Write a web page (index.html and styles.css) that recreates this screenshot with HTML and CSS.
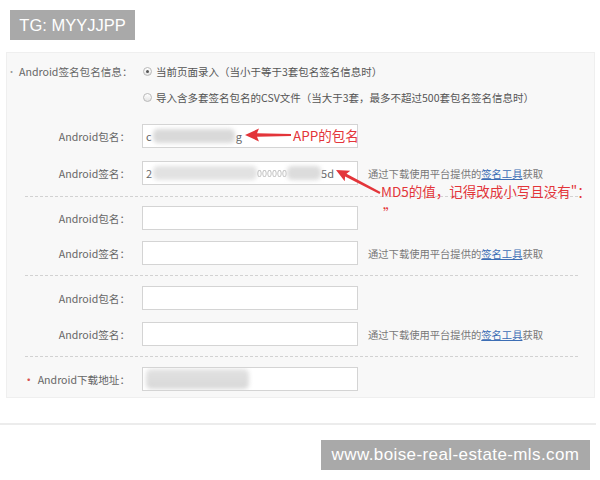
FILE: index.html
```html
<!DOCTYPE html>
<html lang="zh-CN">
<head>
<meta charset="utf-8">
<title>Android签名包名信息</title>
<link rel="stylesheet" href="styles.css">
</head>
<body>
<div class="tag tag-top">TG: MYYJJPP</div>

<div class="panel">
  <div class="row radio-row">
    <div class="label"><span class="dot">•</span>Android签名包名信息：</div>
    <div class="radio-line"><span class="radio checked"></span>当前页面录入（当小于等于3套包名签名信息时）</div>
  </div>
  <div class="row radio-row second">
    <div class="label"></div>
    <div class="radio-line"><span class="radio"></span>导入含多套签名包名的CSV文件（当大于3套，最多不超过500套包名签名信息时）</div>
  </div>

  <div class="group g1">
    <div class="row field">
      <div class="label">Android包名：</div>
      <div class="input"><span>c</span><span class="blob b1"></span><span>g</span></div>
    </div>
    <div class="row field">
      <div class="label">Android签名：</div>
      <div class="input"><span>2</span><span class="blob b2"></span><span class="faint">000000</span><span class="blob b3"></span><span>5d</span></div>
      <div class="hint">通过下载使用平台提供的<span class="link">签名工具</span>获取</div>
    </div>
  </div>
  <div class="sep s1"></div>

  <div class="group g2">
    <div class="row field">
      <div class="label">Android包名：</div>
      <div class="input"></div>
    </div>
    <div class="row field">
      <div class="label">Android签名：</div>
      <div class="input"></div>
      <div class="hint">通过下载使用平台提供的<span class="link">签名工具</span>获取</div>
    </div>
  </div>
  <div class="sep s2"></div>

  <div class="group g3">
    <div class="row field">
      <div class="label">Android包名：</div>
      <div class="input"></div>
    </div>
    <div class="row field">
      <div class="label">Android签名：</div>
      <div class="input"></div>
      <div class="hint">通过下载使用平台提供的<span class="link">签名工具</span>获取</div>
    </div>
  </div>
  <div class="sep s3"></div>

  <div class="row field dl">
    <div class="label"><span class="dot red">•</span>Android下载地址：</div>
    <div class="input"><span class="blob b4"></span></div>
  </div>
</div>

<div class="rule"></div>
<div class="tag tag-bottom">www.boise-real-estate-mls.com</div>

<svg class="arrows" width="600" height="480" viewBox="0 0 600 480" aria-hidden="true">
  <polygon points="245,135 259,128.5 257,133.2 291,133.9 291,136.1 257,136.8 259,141.5" fill="#e3353a"/>
  <polygon points="336,170 350.3,170.7 346.5,173.8 380.5,192.1 379.5,193.9 345.1,176.4 344.7,181.3" fill="#e3353a"/>
</svg>
<div class="note note1">APP的包名</div>
<div class="note note2">MD5的值，记得改成小写且没有"：</div>
<div class="note note3">”</div>
</body>
</html>
```

FILE: styles.css
```css
html, body {
  margin: 0;
  padding: 0;
}
body {
  position: relative;
  width: 600px;
  height: 480px;
  overflow: hidden;
  background: #ffffff;
  padding-top: 10px;
  box-sizing: border-box;
  font-family: "Noto Sans CJK SC", "Noto Sans", sans-serif;
  font-size: 10.6px;
  color: #666;
}

.tag {
  background: #a9a9a9;
  color: #ffffff;
  height: 30px;
  line-height: 30px;
  text-align: center;
  font-family: "Liberation Sans", Arial, sans-serif;
}
.tag-top {
  margin-left: 10px;
  width: 125px;
  font-size: 16.5px;
}
.tag-bottom {
  margin: 15px 0 0 321px;
  width: 269px;
  font-size: 17px;
  letter-spacing: 0.4px;
}

.panel {
  margin: 12px 0 0 6px;
  width: 589px;
  box-sizing: border-box;
  background: #f8f8f8;
  border: 1px solid #efefef;
  padding: 8px 0 6px;
}

.row {
  display: flex;
  align-items: center;
}
.label {
  width: 123px;
  flex: none;
  text-align: right;
  margin-right: 12px;
  color: #666;
  white-space: nowrap;
}
.dot {
  font-size: 9px;
  color: #999;
  margin-right: 3px;
  vertical-align: 1px;
}
.dot.red {
  font-size: 12px;
  color: #d9534f;
  margin-right: 3px;
  vertical-align: -1px;
}

.radio-row {
  height: 20px;
}
.radio-row.second {
  margin-top: 6px;
}
.radio-line {
  display: flex;
  align-items: center;
  color: #555;
  font-size: 10.5px;
  white-space: nowrap;
}
.radio {
  width: 9px;
  height: 9px;
  box-sizing: border-box;
  border: 1px solid #b9b9b9;
  border-radius: 50%;
  background: linear-gradient(#ffffff, #e4e4e4);
  margin: 0 4px 0 1px;
  display: flex;
  align-items: center;
  justify-content: center;
}
.radio.checked::after {
  content: "";
  width: 3px;
  height: 3px;
  border-radius: 50%;
  background: #555;
}

.field {
  height: 24px;
}
.input {
  width: 216px;
  height: 24px;
  flex: none;
  box-sizing: border-box;
  border: 1px solid #d4d4d4;
  background: #ffffff;
  display: flex;
  align-items: center;
  padding: 0 3px;
  font-size: 11px;
  color: #666;
  overflow: hidden;
}
.blob {
  display: inline-block;
  height: 14px;
  background: #d9d9d9;
  border-radius: 5px;
  filter: blur(2px);
}
.b1 { width: 82px; margin: 0 1px 0 1px; }
.b2 { width: 104px; margin-left: 1px; background: #e2e2e2; }
.b3 { width: 34px; background: #dcdcdc; }
.b4 { width: 103px; height: 20px; background: linear-gradient(#e2e2e2, #d8d8d8); }
.faint {
  color: #bbb;
  filter: blur(0.6px);
  font-size: 9px;
}

.hint {
  margin-left: 10px;
  font-size: 10.3px;
  color: #777;
  white-space: nowrap;
}
.link {
  color: #3d6eb5;
  text-decoration: underline;
}

.g1 { margin-top: 17px; }
.g1 .field + .field { margin-top: 13px; }
.g2 { margin-top: 9px; }
.g2 .field + .field { margin-top: 11px; }
.g3 { margin-top: 10px; }
.g3 .field + .field { margin-top: 12px; }

.sep {
  margin-left: 18px;
  width: 553px;
  border-top: 1px dashed #d2d2d2;
}
.s1 { margin-top: 11px; }
.s2 { margin-top: 10px; }
.s3 { margin-top: 10px; }
.dl { margin-top: 10px; }

.rule {
  margin-top: 25px;
  width: 596px;
  height: 2px;
  background: #ececec;
}

.arrows {
  position: absolute;
  left: 0;
  top: 0;
  pointer-events: none;
}
.note {
  position: absolute;
  color: #e3353a;
  font-size: 13.5px;
  line-height: 16px;
  white-space: nowrap;
}
.note1 {
  left: 293px;
  top: 127px;
}
.note2 {
  left: 381px;
  top: 183px;
}
.note3 {
  left: 383px;
  top: 208px;
  line-height: 10px;
}
```
